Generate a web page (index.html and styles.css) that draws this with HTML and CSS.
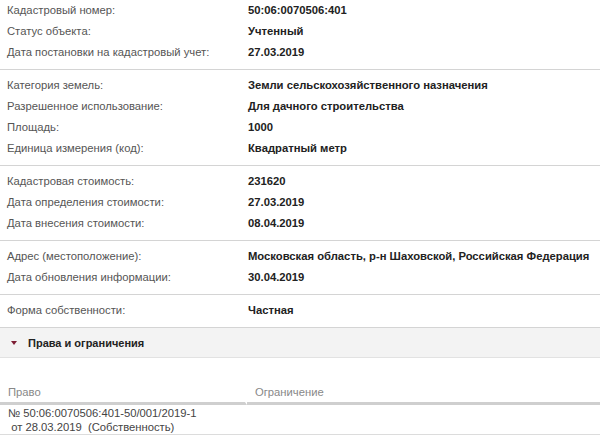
FILE: index.html
```html
<!DOCTYPE html>
<html lang="ru">
<head>
  <meta charset="UTF-8">
  <title>Сведения об объекте</title>
  <link rel="stylesheet" href="styles.css">
</head>
<body>
  <div class="info">
    <div class="group first">
      <div class="row"><span class="label">Кадастровый номер:</span><span class="value">50:06:0070506:401</span></div>
      <div class="row"><span class="label">Статус объекта:</span><span class="value">Учтенный</span></div>
      <div class="row"><span class="label">Дата постановки на кадастровый учет:</span><span class="value">27.03.2019</span></div>
    </div>
    <div class="group">
      <div class="row"><span class="label">Категория земель:</span><span class="value">Земли сельскохозяйственного назначения</span></div>
      <div class="row"><span class="label">Разрешенное использование:</span><span class="value">Для дачного строительства</span></div>
      <div class="row"><span class="label">Площадь:</span><span class="value">1000</span></div>
      <div class="row"><span class="label">Единица измерения (код):</span><span class="value">Квадратный метр</span></div>
    </div>
    <div class="group">
      <div class="row"><span class="label">Кадастровая стоимость:</span><span class="value">231620</span></div>
      <div class="row"><span class="label">Дата определения стоимости:</span><span class="value">27.03.2019</span></div>
      <div class="row"><span class="label">Дата внесения стоимости:</span><span class="value">08.04.2019</span></div>
    </div>
    <div class="group">
      <div class="row"><span class="label">Адрес (местоположение):</span><span class="value">Московская область, р-н Шаховской, Российская Федерация</span></div>
      <div class="row"><span class="label">Дата обновления информации:</span><span class="value">30.04.2019</span></div>
    </div>
    <div class="group">
      <div class="row"><span class="label">Форма собственности:</span><span class="value">Частная</span></div>
    </div>
  </div>

  <div class="section-head"><span class="arrow"></span>Права и ограничения</div>

  <table class="rights">
    <thead>
      <tr><th class="col-right">Право</th><th>Ограничение</th></tr>
    </thead>
    <tbody>
      <tr>
        <td class="col-right">№ 50:06:0070506:401-50/001/2019-1<br>&nbsp;от 28.03.2019&nbsp; (Собственность)</td>
        <td></td>
      </tr>
    </tbody>
  </table>
</body>
</html>
```

FILE: styles.css
```css
body { margin:0; font-family:"Liberation Sans",Arial,sans-serif; background:#fff; color:#333; }
.group { padding:5px 0 6px; border-bottom:1px solid #d4d4d4; }
.group.first { padding-top:0; }
.row { display:grid; grid-template-columns:241px 1fr; padding-left:7px; height:21px; line-height:21px; }
.label { font-size:11.25px; color:#555; }
.value { font-size:11.25px; font-weight:bold; color:#222; }
.section-head { background:#f3f3f3; height:29px; line-height:30px; border-bottom:1px solid #e2e2e2; font-size:11px; font-weight:bold; color:#222; padding-left:11px; }
.arrow { display:inline-block; width:0; height:0; border-left:3px solid transparent; border-right:3px solid transparent; border-top:4px solid #7d1d33; vertical-align:middle; margin-right:11px; position:relative; top:-1px; }
.rights { width:100%; table-layout:fixed; border-collapse:separate; border-spacing:0; margin-top:24px; font-size:11.25px; }
.rights th { text-align:left; font-weight:normal; color:#888; padding:0 8px; height:22px; vertical-align:top; line-height:20px; border-bottom:3px solid #cfcfcf; box-sizing:border-box; }
.rights th.col-right { width:247px; border-right:2px solid #fff; }
.rights td { padding:1px 8px 0; height:28px; line-height:14px; color:#444; border-bottom:1px solid #dcdcdc; vertical-align:top; }
```
